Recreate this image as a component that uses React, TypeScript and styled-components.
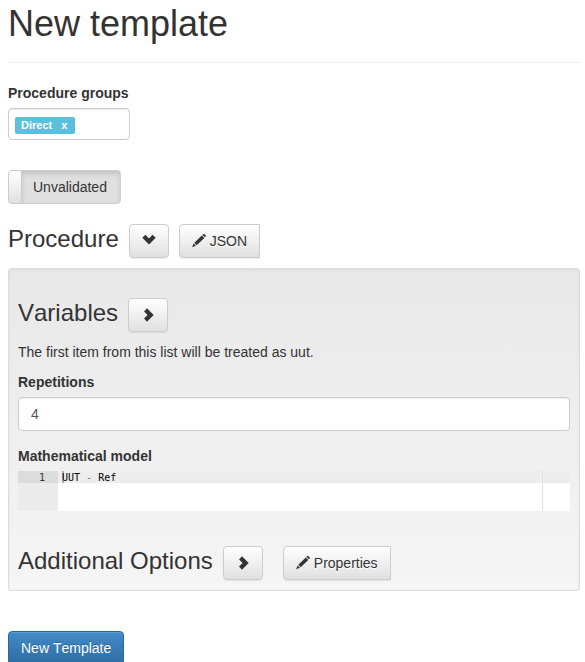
import React, { useState } from "react";
import styled, { createGlobalStyle, css } from "styled-components";

const GlobalStyle = createGlobalStyle`
  *, *::before, *::after { box-sizing: border-box; }
  html { scrollbar-width: none; }
  body {
    margin: 0;
    background: #fff;
    color: #333;
    font: 14px/20px "Liberation Sans", Arial, sans-serif;
    font-kerning: none;
  }
  button, input, textarea { font: inherit; font-kerning: none; color: inherit; }
`;

const Page = styled.form`
  display: flex;
  flex-direction: column;
  padding: 4px 5px 0 8px;
`;

const PageHeader = styled.header`
  padding-bottom: 18px;
  margin-bottom: 20px;
  border-bottom: 1px solid #eee;
`;

const PageTitle = styled.h1`
  margin: 0;
  font-size: 36px;
  line-height: 40px;
  font-weight: 500;
`;

const Field = styled.div`
  display: flex;
  flex-direction: column;
  gap: 5px;
`;

const Label = styled.label`
  font-weight: 700;
`;

const controlFrame = css`
  background: #fff;
  border: 1px solid #ccc;
  border-radius: 4px;
  box-shadow: inset 0 1px 1px rgba(0, 0, 0, 0.075);
`;

const TagBox = styled.div`
  ${controlFrame}
  display: flex;
  align-items: center;
  width: 122px;
  height: 32px;
  padding: 2px 6px 0;
`;

const Tag = styled.span`
  display: flex;
  flex: none;
  align-items: center;
  gap: 9px;
  height: 17px;
  padding: 0 8px 0 6px;
  border-radius: 2px;
  background: #5bc0de;
  color: #fff;
  font-size: 11px;
  line-height: 17px;
  font-weight: 700;
`;

const TagRemove = styled.button`
  padding: 0;
  border: 0;
  background: none;
  cursor: pointer;
`;

const TagInput = styled.input`
  flex: 1;
  min-width: 0;
  border: 0;
  outline: 0;
  background: none;
`;

const Switch = styled.label`
  position: relative;
  display: flex;
  align-self: flex-start;
  height: 34px;
  margin: 30px 0 20px;
  border: 1px solid #ccc;
  border-radius: 4px;
  overflow: hidden;
  background: #e0e0e0;
  cursor: pointer;
`;

const SwitchInput = styled.input`
  position: absolute;
  inset: 0;
  margin: 0;
  opacity: 0;
`;

const SwitchHandle = styled.span`
  width: 13px;
  border-right: 1px solid #ccc;
  border-radius: 3px;
  background: linear-gradient(#fff, #e0e0e0);
`;

const SwitchText = styled.span`
  padding: 6px 13px 6px 11px;
  box-shadow: inset 0 3px 5px rgba(0, 0, 0, 0.125);
`;

const HeadingRow = styled.div`
  display: flex;
  align-items: center;
  gap: 10px;
`;

const SectionTitle = styled.h3`
  margin: 0 0 4px;
  font-size: 24px;
  line-height: 26px;
  font-weight: 500;
`;

const Button = styled.button<{ $squareEnd?: boolean; $spaced?: boolean }>`
  display: inline-flex;
  align-items: center;
  gap: 4px;
  height: 34px;
  padding: 0 12px;
  margin-left: ${(p) => (p.$spaced ? "10px" : "0")};
  border: 1px solid #ccc;
  border-radius: ${(p) => (p.$squareEnd ? "4px 0 0 4px" : "4px")};
  background: linear-gradient(#fff, #e0e0e0);
  box-shadow: inset 0 1px 0 rgba(255, 255, 255, 0.15), 0 1px 1px rgba(0, 0, 0, 0.075);
  text-shadow: 0 1px 0 #fff;
  cursor: pointer;
`;

const PrimaryButton = styled(Button)`
  align-self: flex-start;
  margin-top: 40px;
  border-color: #2b669a;
  background: linear-gradient(#428bca, #2d6ca2);
  color: #fff;
  text-shadow: 0 -1px 0 rgba(0, 0, 0, 0.2);
`;

const Well = styled.section`
  display: flex;
  flex-direction: column;
  margin-top: 10px;
  padding: 29px 9px 10px;
  border: 1px solid #dcdcdc;
  border-radius: 3px;
  background: linear-gradient(#e8e8e8, #f5f5f5);
  box-shadow: inset 0 1px 3px rgba(0, 0, 0, 0.05);
`;

const Note = styled.p`
  margin: 10px 0;
`;

const TextInput = styled.input`
  ${controlFrame}
  width: 100%;
  height: 34px;
  padding: 6px 12px;
  color: #555;
`;

const ModelField = styled(Field)`
  margin: 15px 0 35px;
`;

const Editor = styled.div`
  display: grid;
  grid-template-columns: 40px 1fr;
  height: 40px;
  background: #fff;
  font: 10px/14px "DejaVu Sans Mono", monospace;
`;

const Gutter = styled.div`
  background: #ebebeb;
  text-align: right;
`;

const GutterLine = styled.div`
  height: 12px;
  padding-right: 13px;
  background: #dcdcdc;
`;

const CodeArea = styled.div`
  position: relative;
  color: #000;

  &::after {
    content: "";
    position: absolute;
    top: 0;
    bottom: 0;
    right: 27px;
    width: 1px;
    background: #e0e0e0;
  }
`;

const CodeLine = styled.pre`
  height: 12px;
  margin: 0;
  padding: 0 4px;
  background: #ededed;
  font: inherit;
`;

const Caret = styled.span`
  position: absolute;
  top: 0;
  left: 4px;
  width: 2px;
  height: 12px;
  background: rgba(0, 0, 0, 0.25);
`;

const Operator = styled.span`
  color: #687687;
`;

const CodeInput = styled.textarea`
  position: absolute;
  inset: 0;
  width: 100%;
  height: 100%;
  padding: 0 4px;
  border: 0;
  outline: 0;
  resize: none;
  overflow: hidden;
  background: transparent;
  color: transparent;
  font: inherit;
`;

const Glyph = styled.svg`
  flex: none;
  width: 14px;
  height: 14px;
  fill: currentColor;
`;

const ChevronDown = () => (
  <Glyph viewBox="0 0 14 14" aria-hidden="true">
    <path d="M3.4 .8 7 4.4 10.6 .8 13.7 3.8 7 10.5.3 3.8Z" />
  </Glyph>
);

const ChevronRight = () => (
  <Glyph viewBox="0 0 14 14" aria-hidden="true">
    <path d="M6 .3 12.7 7 6 13.7 3 10.6 6.6 7 3 3.4Z" />
  </Glyph>
);

const Pencil = () => (
  <Glyph viewBox="0 0 14 14" aria-hidden="true">
    <path d="M11.2.1Q11.7-.3 12.2.1L13.7 1.5Q14.1 2 13.7 2.5L12.9 3.3 10.4.9ZM9.8 1.5 12.3 3.9 4.7 11.2 2.3 8.8ZM1.6 9.4 4 11.8.1 13.2Z" />
  </Glyph>
);

export default function App() {
  const [groups, setGroups] = useState(["Direct"]);
  const [model, setModel] = useState("UUT - Ref");

  return (
    <>
      <GlobalStyle />
      <Page onSubmit={(e) => e.preventDefault()}>
        <PageHeader>
          <PageTitle>New template</PageTitle>
        </PageHeader>

        <Field>
          <Label htmlFor="groups">Procedure groups</Label>
          <TagBox>
            {groups.map((g) => (
              <Tag key={g}>
                {g}
                <TagRemove
                  type="button"
                  aria-label={`Remove ${g}`}
                  onClick={() => setGroups(groups.filter((x) => x !== g))}
                >
                  x
                </TagRemove>
              </Tag>
            ))}
            <TagInput id="groups" type="text" />
          </TagBox>
        </Field>

        <Switch>
          <SwitchInput type="checkbox" />
          <SwitchHandle />
          <SwitchText>Unvalidated</SwitchText>
        </Switch>

        <HeadingRow>
          <SectionTitle>Procedure</SectionTitle>
          <Button type="button" aria-label="Collapse procedure">
            <ChevronDown />
          </Button>
          <Button type="button" $squareEnd>
            <Pencil />
            JSON
          </Button>
        </HeadingRow>

        <Well>
          <HeadingRow>
            <SectionTitle>Variables</SectionTitle>
            <Button type="button" aria-label="Expand variables">
              <ChevronRight />
            </Button>
          </HeadingRow>
          <Note>The first item from this list will be treated as uut.</Note>

          <Field>
            <Label htmlFor="repetitions">Repetitions</Label>
            <TextInput id="repetitions" type="text" defaultValue="4" />
          </Field>

          <ModelField>
            <Label htmlFor="model">Mathematical model</Label>
            <Editor>
              <Gutter>
                <GutterLine>1</GutterLine>
              </Gutter>
              <CodeArea>
                <CodeLine aria-hidden="true">
                  {model
                    .split(/([-+*/])/)
                    .map((part, i) => (i % 2 ? <Operator key={i}>{part}</Operator> : part))}
                </CodeLine>
                <Caret />
                <CodeInput
                  id="model"
                  spellCheck={false}
                  value={model}
                  onChange={(e) => setModel(e.target.value)}
                />
              </CodeArea>
            </Editor>
          </ModelField>

          <HeadingRow>
            <SectionTitle>Additional Options</SectionTitle>
            <Button type="button" aria-label="Expand additional options">
              <ChevronRight />
            </Button>
            <Button type="button" $squareEnd $spaced>
              <Pencil />
              Properties
            </Button>
          </HeadingRow>
        </Well>

        <PrimaryButton type="submit">New Template</PrimaryButton>
      </Page>
    </>
  );
}
